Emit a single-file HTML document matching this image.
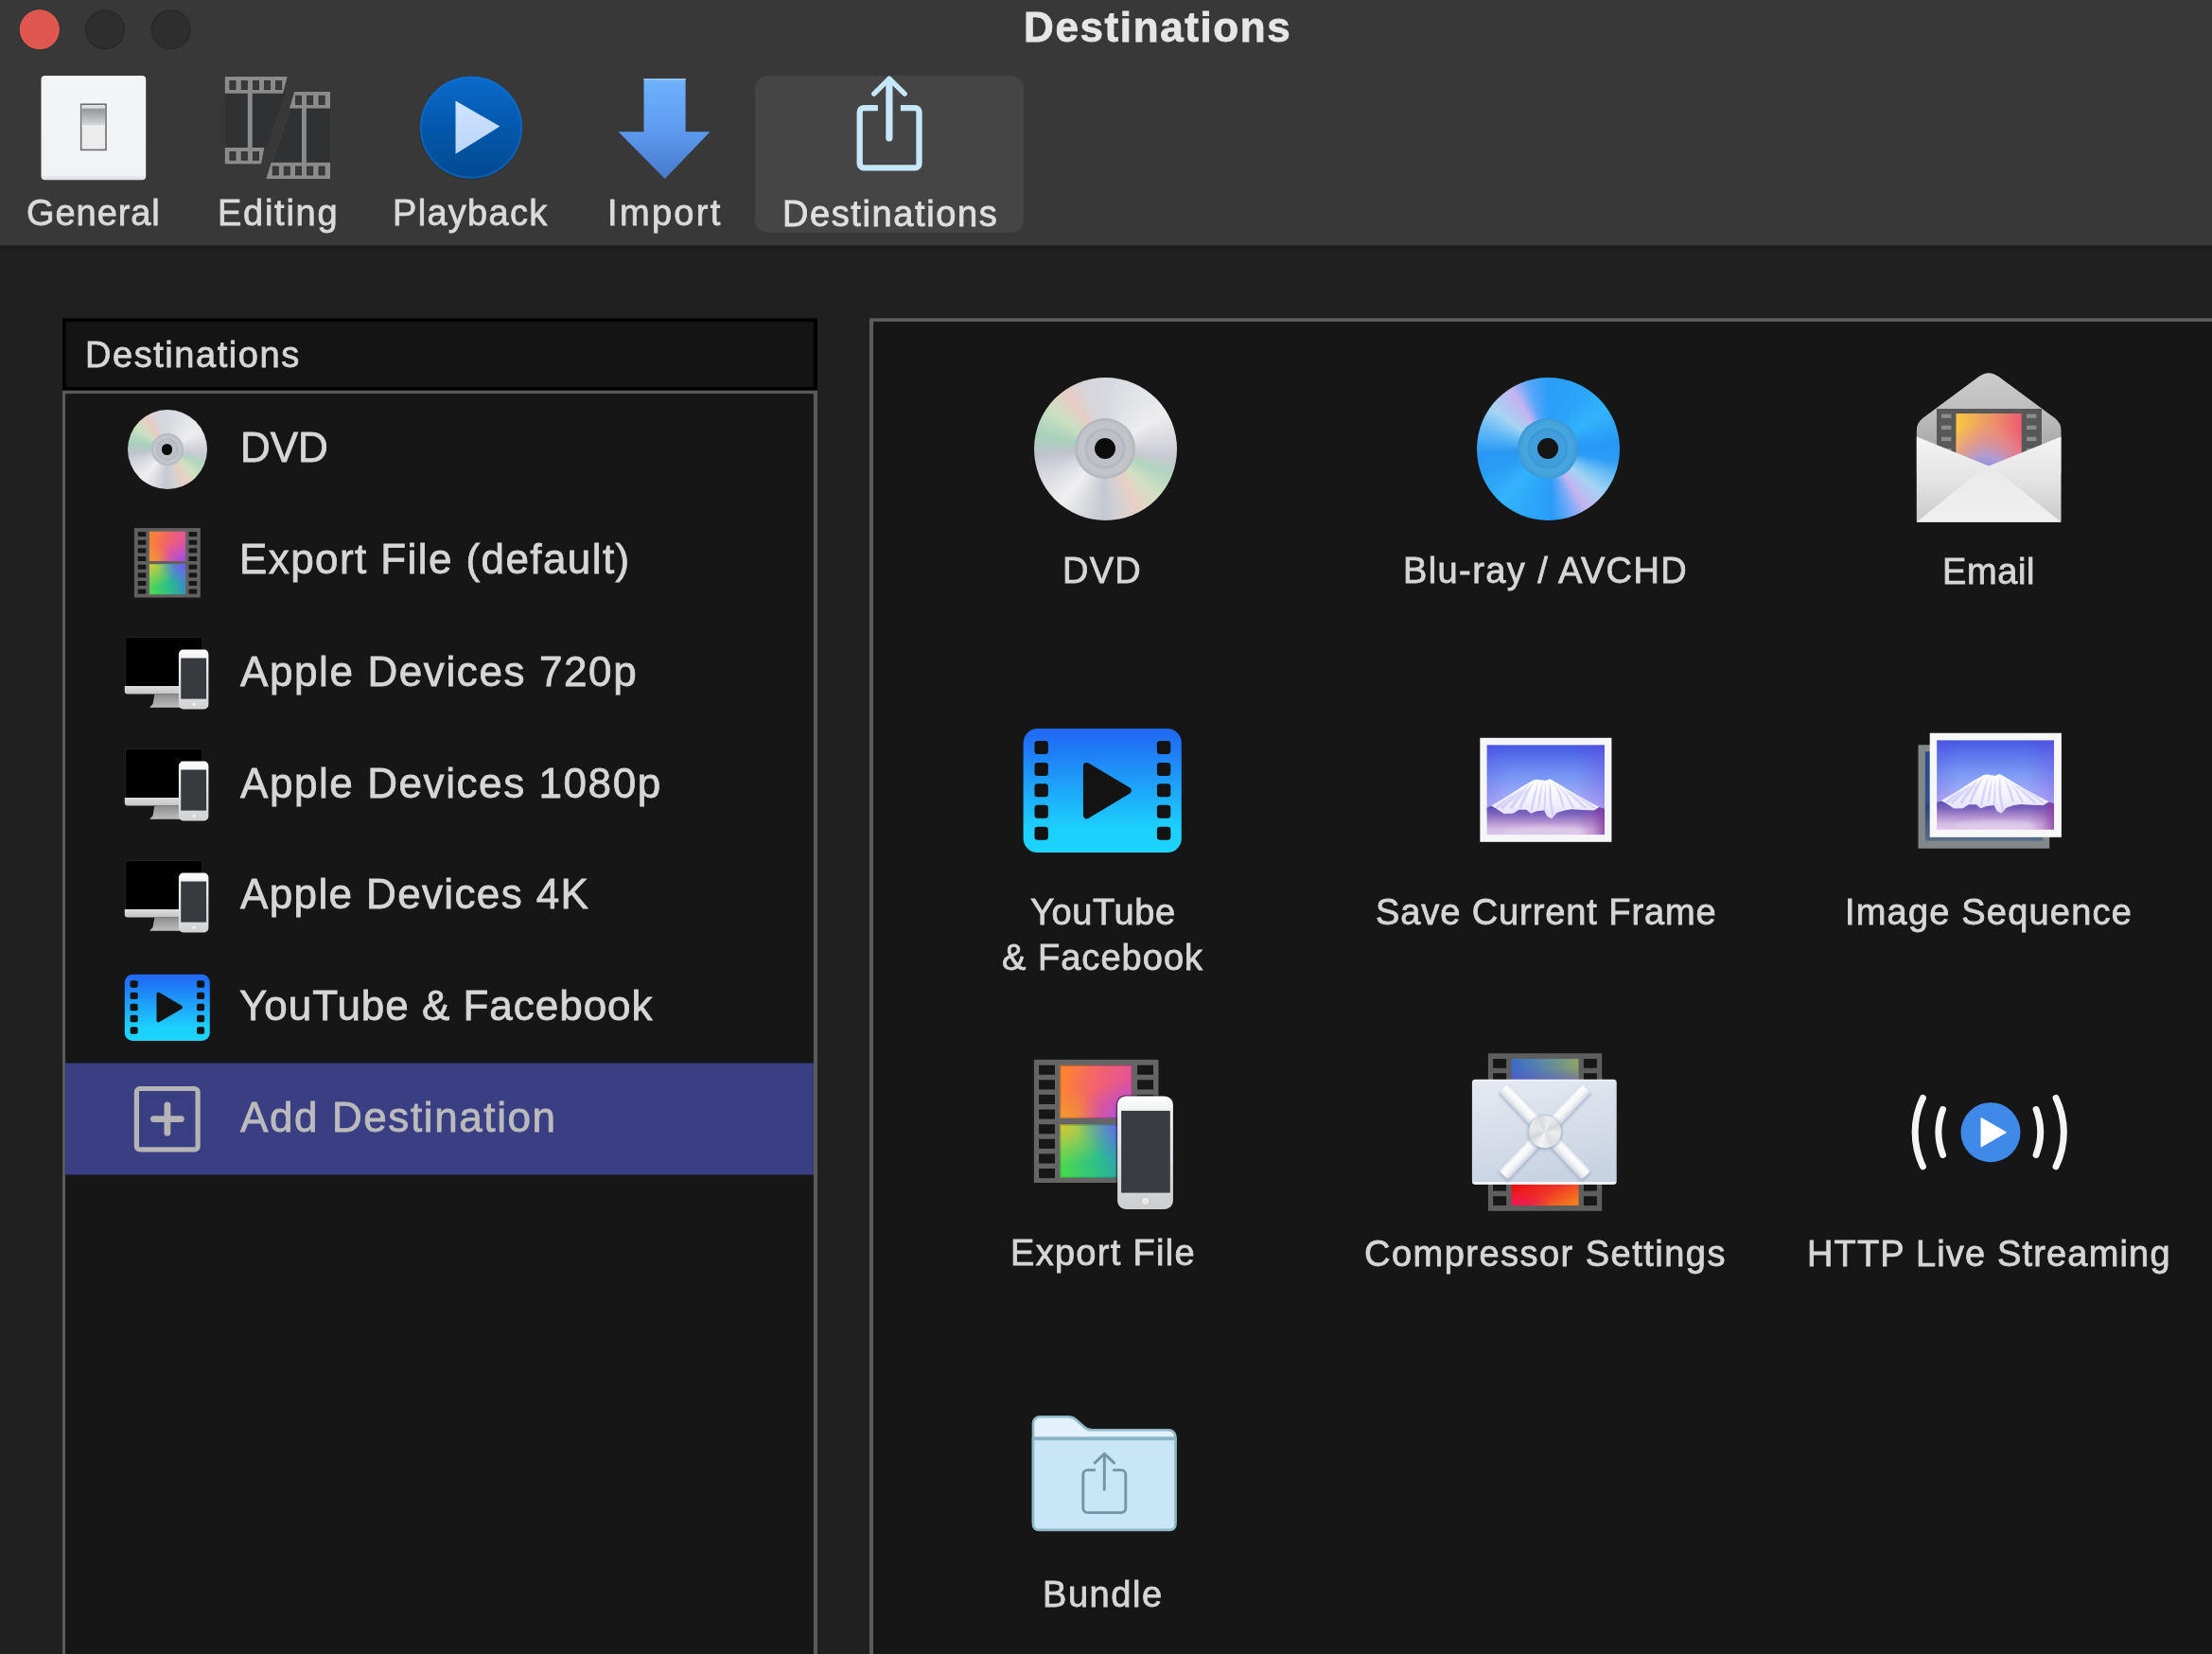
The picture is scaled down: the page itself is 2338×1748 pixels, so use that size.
<!DOCTYPE html>
<html lang="en">
<head>
<meta charset="utf-8">
<title>Destinations</title>
<style>
html,body{margin:0;padding:0;}
body{width:2338px;height:1748px;overflow:hidden;background:#202020;position:relative;font-family:"Liberation Sans",sans-serif;color:#dcdcdc;}
.abs{position:absolute;}
.t{position:absolute;white-space:nowrap;line-height:1;-webkit-text-stroke:0.8px currentColor;will-change:transform;}
.disc{border-radius:50%;background:conic-gradient(from 0deg,#d5d8de 0deg,#e2e4e8 30deg,#ededef 60deg,#d2d2da 88deg,#c6cace 99deg,#b0d4c0 111deg,#d0e0c2 131deg,#e8cfc4 151deg,#d2d1d5 168deg,#c4c8d0 182deg,#d8dade 200deg,#f0f0f2 220deg,#d6d8de 248deg,#c0c4cc 264deg,#a8d0bc 282deg,#cbe0c2 305deg,#e8ccc4 326deg,#d6d5da 342deg,#d5d8de 360deg);}
.bdisc{border-radius:50%;background:conic-gradient(from 0deg,#2a9ef8 0deg,#2aa4fa 30deg,#32b4fc 55deg,#2898f6 85deg,#2c9cf6 100deg,#70c0f4 115deg,#a2d4f4 129deg,#c2b4f0 148deg,#6aa8f8 162deg,#2a9cf8 176deg,#2ca8fa 200deg,#34b4fc 222deg,#2a9cf6 250deg,#2a98f4 266deg,#60b8f6 286deg,#a4d4f4 305deg,#c4b4f0 329deg,#58a6f8 343deg,#2a9ef8 360deg);}
.bdiscring{border-radius:50%;background:radial-gradient(circle,#3f9edb 0,#3f9edb 40%,#3998d4 44%,#47a5df 50%,#44a2dc 62%,#3c9ad6 68%,#3d9cd8 100%);}
.hub{border-radius:50%;background:conic-gradient(from 20deg,#eeeef0,#d4d6da 40deg,#ececee 80deg,#dcdde0 130deg,#f6f6f7 180deg,#d4d6da 225deg,#eaeaec 270deg,#d8dade 320deg,#eeeef0 360deg);}
.discring{border-radius:50%;background:radial-gradient(circle,#bdc0c6 0,#bdc0c6 40%,#b2b5bc 44%,#c2c5ca 50%,#c0c3c8 62%,#b4b7be 68%,#b7bac1 100%);}
.dischole{border-radius:50%;background:#0c0c0c;}
svg{position:absolute;overflow:visible;}
</style>
</head>
<body>
<svg width="2338" height="1748" viewBox="0 0 2338 1748" style="left:0;top:0">
<rect x="0" y="0" width="2338" height="259.5" fill="#383838"/>
<rect x="0" y="259.5" width="2338" height="4.2" fill="#1c1c1c"/>
<rect x="798" y="80" width="284" height="165.8" rx="14" fill="#454545"/>
<circle cx="41.8" cy="31.2" r="20.9" fill="#e0574f"/><circle cx="41.8" cy="31.2" r="20.4" fill="none" stroke="#ea5b52" stroke-width="1" opacity="0.7"/>
<circle cx="111.05" cy="31.2" r="20.8" fill="#2e2e2e"/><circle cx="111.05" cy="31.2" r="20.3" fill="none" stroke="#282828" stroke-width="1.2"/>
<circle cx="180.6" cy="31.2" r="20.8" fill="#2e2e2e"/><circle cx="180.6" cy="31.2" r="20.3" fill="none" stroke="#282828" stroke-width="1.2"/>
<rect x="66" y="336.4" width="798" height="76.1" fill="#000"/>
<rect x="69.4" y="339.8" width="790.5" height="69.1" fill="#141414"/>
<rect x="66" y="412.8" width="798" height="1400" fill="#5a5a5a"/>
<rect x="69.1" y="416.1" width="790.8" height="1400" fill="#161616"/>
<rect x="69.1" y="1123.5" width="790.8" height="118" fill="#3a3f84"/>
<rect x="919" y="336.3" width="1500" height="1500" fill="#5c5c5c"/>
<rect x="923" y="339.9" width="1500" height="1500" fill="#161616"/>
</svg>
<!--TOOLBAR-ICONS-->
<svg width="2338" height="1748" viewBox="0 0 2338 1748" style="left:0;top:0">
<defs>
<linearGradient id="gSw" x1="0" y1="0" x2="0" y2="1"><stop offset="0" stop-color="#e4e4e6"/><stop offset="0.12" stop-color="#dcdcde"/><stop offset="0.2" stop-color="#97989b"/><stop offset="0.75" stop-color="#c4c5c8"/><stop offset="0.93" stop-color="#d8d9db"/><stop offset="1" stop-color="#fafafa"/></linearGradient>
<linearGradient id="gPlate" x1="0" y1="0" x2="0" y2="1"><stop offset="0" stop-color="#f4f5f8"/><stop offset="0.95" stop-color="#f1f2f5"/><stop offset="1" stop-color="#d9dadd"/></linearGradient>
<linearGradient id="gPlay" x1="0" y1="0" x2="0" y2="1"><stop offset="0" stop-color="#0a6bcb"/><stop offset="0.5" stop-color="#0458ac"/><stop offset="1" stop-color="#024a90"/></linearGradient>
<linearGradient id="gTri" x1="0" y1="0" x2="0" y2="1"><stop offset="0" stop-color="#cfe4fd"/><stop offset="1" stop-color="#b9d5f9"/></linearGradient>
<linearGradient id="gImp" x1="0" y1="83" x2="0" y2="189" gradientUnits="userSpaceOnUse"><stop offset="0" stop-color="#6fb2fd"/><stop offset="0.5" stop-color="#5e9cf0"/><stop offset="1" stop-color="#4679cb"/></linearGradient>
</defs>
<!-- General -->
<rect x="43.5" y="80" width="110.7" height="110.2" rx="4" fill="url(#gPlate)"/>
<rect x="85.7" y="110.2" width="26.3" height="48.2" fill="#ececed" stroke="#6d6e71" stroke-width="1.6"/>
<rect x="86.6" y="111.1" width="24.5" height="22.6" fill="url(#gSw)"/>
<!-- Editing -->
<g>
<polygon points="237.8,98 302,98 281,157 237.8,157" fill="#303133"/>
<polygon points="308,114 349,114 349,172.5 288.5,172.5" fill="#303133"/>
<polygon points="237.8,81 303.6,81 299,98.7 237.8,98.7" fill="#8b8b8b"/>
<polygon points="237.8,156 279.3,156 276,173.3 237.8,173.3" fill="#8b8b8b"/>
<polygon points="311.3,96.9 349,96.9 349,114.6 305.9,114.6" fill="#8b8b8b"/>
<polygon points="286.7,171.8 349,171.8 349,189.1 281.3,189.1" fill="#8b8b8b"/>
<rect x="261.8" y="98" width="4.9" height="59" fill="#8b8b8b"/>
<rect x="319" y="114" width="4.9" height="58.5" fill="#8b8b8b"/>
<g fill="#3a3a3a" stroke="#2c2c2c" stroke-width="0.8">
<rect x="242.9" y="85.4" width="6.1" height="9.2"/><rect x="255.2" y="85.4" width="6.1" height="9.2"/><rect x="267.5" y="85.4" width="6.1" height="9.2"/><rect x="279.5" y="85.4" width="6.1" height="9.2"/><rect x="291.6" y="85.4" width="6.1" height="9.2"/>
<rect x="242.9" y="160.4" width="6.1" height="8.8"/><rect x="255.2" y="160.4" width="6.1" height="8.8"/><rect x="267.5" y="160.4" width="6.1" height="8.8"/>
<rect x="312.5" y="101.2" width="6.1" height="9.2"/><rect x="324.6" y="101.2" width="6.1" height="9.2"/><rect x="337" y="101.2" width="6.1" height="9.2"/>
<rect x="288.2" y="176" width="6.1" height="9"/><rect x="300.2" y="176" width="6.1" height="9"/><rect x="312.5" y="176" width="6.1" height="9"/><rect x="324.6" y="176" width="6.1" height="9"/><rect x="337" y="176" width="6.1" height="9"/>
</g>
</g>
<!-- Playback -->
<circle cx="498" cy="136" r="54" fill="#2a2a2a" opacity="0.5"/>
<circle cx="498" cy="134.7" r="54" fill="url(#gPlay)"/>
<circle cx="498" cy="134.7" r="53" fill="none" stroke="#0b70d2" stroke-width="2" opacity="0.6"/>
<polygon points="481.5,106.4 528.4,133.6 481.5,162.7" fill="url(#gTri)"/>
<!-- Import -->
<polygon points="680.5,83 724.6,83 724.6,139.2 750.5,139.2 702.8,189.1 653.6,139.2 680.5,139.2" fill="url(#gImp)"/>
<rect x="680.5" y="83" width="44.1" height="1.6" fill="#93c8ff"/>
<!-- Destinations share -->
<g fill="none" stroke="#c5e7f7" stroke-linejoin="round">
<path d="M927.9,114.05 H913.1 a4.4,4.4 0 0 0 -4.4,4.4 V172.9 a4.4,4.4 0 0 0 4.4,4.4 H967.1 a4.4,4.4 0 0 0 4.4,-4.4 V118.45 a4.4,4.4 0 0 0 -4.4,-4.4 H951.9" stroke-width="6.3" stroke-linecap="butt"/>
<path d="M939.9,145.8 V85" stroke-width="7.2" stroke-linecap="round"/>
<path d="M923.8,99.2 L939.9,83.1 L956.2,99.2" stroke-width="5.4" stroke-linecap="round"/>
</g>
</svg>
<!--/TOOLBAR-ICONS-->
<!--TEXTS-->
<div class="t" style="left:1082.38px;top:6.94px;font-size:44px;font-weight:bold;letter-spacing:1.613px;color:#e6e6e6;">Destinations</div>
<div class="t" style="left:27.84px;top:206.46px;font-size:38px;font-weight:normal;letter-spacing:0.937px;color:#dadada;">General</div>
<div class="t" style="left:229.78px;top:206.16px;font-size:38px;font-weight:normal;letter-spacing:1.726px;color:#dadada;">Editing</div>
<div class="t" style="left:415.28px;top:205.66px;font-size:38px;font-weight:normal;letter-spacing:1.296px;color:#dadada;">Playback</div>
<div class="t" style="left:642.25px;top:205.66px;font-size:38px;font-weight:normal;letter-spacing:2.341px;color:#dadada;">Import</div>
<div class="t" style="left:826.91px;top:206.51px;font-size:38px;font-weight:normal;letter-spacing:1.596px;color:#e0e0e0;">Destinations</div>
<div class="t" style="left:89.77px;top:356.13px;font-size:38px;font-weight:normal;letter-spacing:1.556px;color:#d6d6d6;">Destinations</div>
<div class="t" style="left:253.67px;top:451.05px;font-size:44px;font-weight:normal;letter-spacing:-0.021px;color:#d6d6d6;">DVD</div>
<div class="t" style="left:253.17px;top:568.55px;font-size:44px;font-weight:normal;letter-spacing:1.413px;color:#d6d6d6;">Export File (default)</div>
<div class="t" style="left:254.46px;top:687.55px;font-size:44px;font-weight:normal;letter-spacing:1.606px;color:#d6d6d6;">Apple Devices 720p</div>
<div class="t" style="left:254.46px;top:805.55px;font-size:44px;font-weight:normal;letter-spacing:1.575px;color:#d6d6d6;">Apple Devices 1080p</div>
<div class="t" style="left:254.46px;top:923.05px;font-size:44px;font-weight:normal;letter-spacing:1.370px;color:#d6d6d6;">Apple Devices 4K</div>
<div class="t" style="left:252.88px;top:1041.05px;font-size:44px;font-weight:normal;letter-spacing:0.978px;color:#d6d6d6;">YouTube &amp; Facebook</div>
<div class="t" style="left:254.43px;top:1159.12px;font-size:44px;font-weight:normal;letter-spacing:1.602px;color:#bcbbbc;">Add Destination</div>
<div class="t" style="left:1122.79px;top:584.13px;font-size:38px;font-weight:normal;letter-spacing:1.279px;color:#d6d6d6;">DVD</div>
<div class="t" style="left:1482.79px;top:584.13px;font-size:38px;font-weight:normal;letter-spacing:1.401px;color:#d6d6d6;">Blu-ray / AVCHD</div>
<div class="t" style="left:2052.79px;top:584.63px;font-size:38px;font-weight:normal;letter-spacing:0.615px;color:#d6d6d6;">Email</div>
<div class="t" style="left:1088.75px;top:945.13px;font-size:38px;font-weight:normal;letter-spacing:0.627px;color:#d6d6d6;">YouTube</div>
<div class="t" style="left:1059.27px;top:993.43px;font-size:38px;font-weight:normal;letter-spacing:1.031px;color:#d6d6d6;">&amp; Facebook</div>
<div class="t" style="left:1453.56px;top:944.89px;font-size:38px;font-weight:normal;letter-spacing:0.909px;color:#d6d6d6;">Save Current Frame</div>
<div class="t" style="left:1949.75px;top:944.63px;font-size:38px;font-weight:normal;letter-spacing:1.193px;color:#d6d6d6;">Image Sequence</div>
<div class="t" style="left:1068.29px;top:1305.13px;font-size:38px;font-weight:normal;letter-spacing:1.293px;color:#d6d6d6;">Export File</div>
<div class="t" style="left:1441.98px;top:1305.73px;font-size:38px;font-weight:normal;letter-spacing:1.477px;color:#d6d6d6;">Compressor Settings</div>
<div class="t" style="left:1909.79px;top:1305.63px;font-size:38px;font-weight:normal;letter-spacing:1.166px;color:#d6d6d6;">HTTP Live Streaming</div>
<div class="t" style="left:1102.29px;top:1666.13px;font-size:38px;font-weight:normal;letter-spacing:1.561px;color:#d6d6d6;">Bundle</div><!--/TEXTS-->
<!--LEFT-ICONS-->
<div class="abs disc" style="left:134.9px;top:432.9px;width:84px;height:84px;"></div>
<div class="abs discring" style="left:159.8px;top:457.9px;width:34px;height:34px;"></div>
<div class="abs dischole" style="left:171.1px;top:469.2px;width:11.4px;height:11.4px;"></div>
<svg width="2338" height="1748" viewBox="0 0 2338 1748" style="left:0;top:0">
<defs>
<linearGradient id="fA" x1="0" y1="0.3" x2="1" y2="0.5"><stop offset="0" stop-color="#fd8430"/><stop offset="0.5" stop-color="#f2626e"/><stop offset="1" stop-color="#e0529e"/></linearGradient>
<radialGradient id="fA2" cx="1" cy="1" r="0.75"><stop offset="0" stop-color="#9a48ea"/><stop offset="0.35" stop-color="#b050d8" stop-opacity="0.75"/><stop offset="1" stop-color="#c050c0" stop-opacity="0"/></radialGradient>
<radialGradient id="fA3" cx="0" cy="1" r="0.6"><stop offset="0" stop-color="#f09a30"/><stop offset="1" stop-color="#f09a30" stop-opacity="0"/></radialGradient>
<linearGradient id="fB" x1="0" y1="0.6" x2="1" y2="0.4"><stop offset="0" stop-color="#48d850"/><stop offset="0.5" stop-color="#2cbe8c"/><stop offset="1" stop-color="#3488c4"/></linearGradient>
<radialGradient id="fB2" cx="0" cy="0" r="0.8"><stop offset="0" stop-color="#e0c434"/><stop offset="0.4" stop-color="#c4cc40" stop-opacity="0.7"/><stop offset="1" stop-color="#a0d050" stop-opacity="0"/></radialGradient>
<radialGradient id="fB3" cx="1" cy="0" r="0.75"><stop offset="0" stop-color="#7458f4"/><stop offset="0.4" stop-color="#6a6eea" stop-opacity="0.7"/><stop offset="1" stop-color="#5090d8" stop-opacity="0"/></radialGradient>
<linearGradient id="gYT" x1="0" y1="0" x2="0" y2="1"><stop offset="0" stop-color="#2168f3"/><stop offset="0.15" stop-color="#1f78f6"/><stop offset="0.8" stop-color="#1cd0fd"/><stop offset="1" stop-color="#1cd4fd"/></linearGradient>
<linearGradient id="gPhone" x1="0" y1="0" x2="0" y2="1"><stop offset="0" stop-color="#fbfbfb"/><stop offset="0.5" stop-color="#e4e5e6"/><stop offset="1" stop-color="#d0d2d4"/></linearGradient>
<linearGradient id="gChin" x1="0" y1="0" x2="0" y2="1"><stop offset="0" stop-color="#dedede"/><stop offset="1" stop-color="#c4c4c4"/></linearGradient>
<linearGradient id="gStand" x1="0" y1="0" x2="0" y2="1"><stop offset="0" stop-color="#8c8c8c"/><stop offset="1" stop-color="#bdbdbd"/></linearGradient>
<g id="appledev">
<path d="M131.8,676 a3,3 0 0 1 3,-3 H211.6 a3,3 0 0 1 3,3 V730.5 a3,3 0 0 1 -3,3 H134.8 a3,3 0 0 1 -3,-3 Z" fill="#1e1e1e"/>
<path d="M133.2,676.4 a2.4,2.4 0 0 1 2.4,-2.4 H210.8 a2.4,2.4 0 0 1 2.4,2.4 V725 H133.2 Z" fill="#000"/>
<path d="M131.8,725 H214.6 V730.5 a3,3 0 0 1 -3,3 H134.8 a3,3 0 0 1 -3,-3 Z" fill="url(#gChin)"/>
<polygon points="163.4,733.5 200,733.5 200,747.7 158,747.7 161.5,744" fill="url(#gStand)"/>
<rect x="188.9" y="686.6" width="31.5" height="62.8" rx="4.6" fill="url(#gPhone)"/>
<rect x="191.2" y="695.5" width="26.9" height="43.1" fill="#373b40"/>
<circle cx="205" cy="744.2" r="2.4" fill="#eeeeef" stroke="#c4c6c8" stroke-width="0.7"/>
</g>
<g id="yticon">
<rect x="0" y="0" width="90" height="70.2" rx="8.5" fill="url(#gYT)"/>
<g fill="#131313">
<rect x="5.8" y="6.5" width="8.1" height="7.4" rx="1.8"/><rect x="5.8" y="18.9" width="8.1" height="7.4" rx="1.8"/><rect x="5.8" y="31" width="8.1" height="7.4" rx="1.8"/><rect x="5.8" y="43" width="8.1" height="7.4" rx="1.8"/><rect x="5.8" y="55.5" width="8.1" height="7.4" rx="1.8"/>
<rect x="76.2" y="6.5" width="8.1" height="7.4" rx="1.8"/><rect x="76.2" y="18.9" width="8.1" height="7.4" rx="1.8"/><rect x="76.2" y="31" width="8.1" height="7.4" rx="1.8"/><rect x="76.2" y="43" width="8.1" height="7.4" rx="1.8"/><rect x="76.2" y="55.5" width="8.1" height="7.4" rx="1.8"/>
<path d="M35.7,20.8 L59.2,34.7 L35.7,48.6 Z" stroke="#131313" stroke-width="4" stroke-linejoin="round"/>
</g>
</g>
</defs>
<!-- Export file small -->
<rect x="141.9" y="558.1" width="69.9" height="73.4" fill="#616161"/>
<g fill="#161616">
<rect x="145.7" y="562.1" width="8.6" height="5"/><rect x="145.7" y="570.75" width="8.6" height="5"/><rect x="145.7" y="579.4" width="8.6" height="5"/><rect x="145.7" y="588.05" width="8.6" height="5"/><rect x="145.7" y="596.7" width="8.6" height="5"/><rect x="145.7" y="605.35" width="8.6" height="5"/><rect x="145.7" y="614" width="8.6" height="5"/><rect x="145.7" y="622.65" width="8.6" height="5"/>
<rect x="199.6" y="562.1" width="8.6" height="5"/><rect x="199.6" y="570.75" width="8.6" height="5"/><rect x="199.6" y="579.4" width="8.6" height="5"/><rect x="199.6" y="588.05" width="8.6" height="5"/><rect x="199.6" y="596.7" width="8.6" height="5"/><rect x="199.6" y="605.35" width="8.6" height="5"/><rect x="199.6" y="614" width="8.6" height="5"/><rect x="199.6" y="622.65" width="8.6" height="5"/>
</g>
<rect x="157.9" y="561.7" width="38.2" height="31.2" fill="url(#fA)"/><rect x="157.9" y="561.7" width="38.2" height="31.2" fill="url(#fA3)"/><rect x="157.9" y="561.7" width="38.2" height="31.2" fill="url(#fA2)"/>
<rect x="157.9" y="596.3" width="38.2" height="31.9" fill="url(#fB)"/><rect x="157.9" y="596.3" width="38.2" height="31.9" fill="url(#fB2)"/><rect x="157.9" y="596.3" width="38.2" height="31.9" fill="url(#fB3)"/>
<!-- Apple devices x3 -->
<use href="#appledev"/>
<use href="#appledev" transform="translate(0,118)"/>
<use href="#appledev" transform="translate(0,236)"/>
<!-- YouTube small -->
<use href="#yticon" transform="translate(131.8,1029.8)"/>
<!-- Add -->
<rect x="144.4" y="1150.5" width="64.7" height="64.4" rx="3.5" fill="none" stroke="#b5b3b4" stroke-width="5.2"/>
<path d="M162.4,1182.6 H191.4 M176.9,1168 V1197.2" stroke="#b5b3b4" stroke-width="6.8" stroke-linecap="round" fill="none"/>
</svg>
<!--/LEFT-ICONS-->
<!--GRID-ICONS-->
<div class="abs disc" style="left:1092.8px;top:398.7px;width:151px;height:151px;"></div>
<div class="abs discring" style="left:1136.1px;top:442px;width:64px;height:64px;"></div>
<div class="abs dischole" style="left:1157px;top:463px;width:22px;height:22px;"></div>
<div class="abs bdisc" style="left:1560.9px;top:398.5px;width:151px;height:151px;"></div>
<div class="abs bdiscring" style="left:1604.4px;top:442px;width:64px;height:64px;"></div>
<div class="abs dischole" style="left:1625.4px;top:463px;width:22px;height:22px;background:#151515;"></div>
<svg width="2338" height="1748" viewBox="0 0 2338 1748" style="left:0;top:0">
<defs>
<linearGradient id="gSky" x1="0" y1="0" x2="0" y2="1"><stop offset="0" stop-color="#4757e6"/><stop offset="0.25" stop-color="#5f7cee"/><stop offset="0.5" stop-color="#7c9af4"/><stop offset="0.75" stop-color="#a0acf9"/><stop offset="0.92" stop-color="#bcb8fc"/><stop offset="1" stop-color="#c6bcfc"/></linearGradient>
<linearGradient id="gFore" x1="0" y1="0" x2="0" y2="1"><stop offset="0" stop-color="#5650b6"/><stop offset="0.25" stop-color="#7a62bc"/><stop offset="0.55" stop-color="#b090d0"/><stop offset="0.8" stop-color="#d4bce4"/><stop offset="1" stop-color="#dcc6ea"/></linearGradient>
<radialGradient id="gMag" cx="1" cy="0.65" r="0.35" gradientTransform="scale(1,1)"><stop offset="0" stop-color="#8a38a0"/><stop offset="0.5" stop-color="#9448a8" stop-opacity="0.6"/><stop offset="1" stop-color="#a060b0" stop-opacity="0"/></radialGradient>
<linearGradient id="gSnow" x1="0" y1="0" x2="0" y2="1"><stop offset="0" stop-color="#ffffff"/><stop offset="0.6" stop-color="#f2f0ff"/><stop offset="1" stop-color="#dcd8fa"/></linearGradient>
<clipPath id="cpFuji"><rect x="0" y="0" width="124.6" height="95"/></clipPath>
<filter id="fBlur" x="-10%" y="-10%" width="120%" height="120%"><feGaussianBlur stdDeviation="0.45"/></filter>
<filter id="fBlur2" x="-30%" y="-80%" width="160%" height="260%"><feGaussianBlur stdDeviation="2.2"/></filter>
<linearGradient id="gMagL" x1="0" y1="0" x2="1" y2="0"><stop offset="0" stop-color="#8a3aa2" stop-opacity="0"/><stop offset="0.55" stop-color="#8a3aa2" stop-opacity="0.28"/><stop offset="1" stop-color="#86389e" stop-opacity="0.8"/></linearGradient>
<linearGradient id="gVig" x1="0" y1="0" x2="1" y2="0"><stop offset="0" stop-color="#5a3cd8" stop-opacity="0.22"/><stop offset="0.2" stop-color="#5a3cd8" stop-opacity="0"/><stop offset="0.75" stop-color="#6a3cd8" stop-opacity="0"/><stop offset="1" stop-color="#6a3cd8" stop-opacity="0.3"/></linearGradient>
<g id="fuji" clip-path="url(#cpFuji)">
<rect x="0" y="0" width="124.6" height="72" fill="url(#gSky)"/>
<rect x="0" y="0" width="124.6" height="72" fill="url(#gVig)"/>
<path d="M4,65 L23,53.6 L38.7,43.4 L49,37.5 Q52,36.4 54.5,36.7 L62.3,37.9 L66.6,36 L70.2,37.9 L78,42.6 L93.8,52 L109.5,60.7 L121,66.5 V80 H4 Z" fill="url(#gSnow)" filter="url(#fBlur)"/>
<g fill="#aeaaf2" opacity="0.4" filter="url(#fBlur)">
<path d="M55,38 L49.5,52 L46,70 L48,70 L52,54 Z"/>
<path d="M59,39 L55,54 L54,66 L55.6,66 L57.6,55 Z"/>
<path d="M62.5,39 L60.5,55 L60,70 L62,70 L62.6,56 Z"/>
<path d="M66.9,37 L65.6,50 L66.4,62 L69.6,76 L71,72 L68.6,58 L68.2,48 Z"/>
<path d="M70.5,39.5 L76,52 L80,66 L82.4,66 L78.6,52 Z"/>
<path d="M73,40.6 L83,53 L90,66 L93,67 L86,54 Z"/>
<path d="M78,43.5 L92,57 L103,67 L106.6,67 L96,57 Z"/>
<path d="M86,49 L104,61 L112,67 L115,66.5 L106,60 Z"/>
<path d="M50,38.5 L40,50 L34,66 L36.6,67 L43.6,52 Z"/>
<path d="M45,40.8 L33,52 L24,66 L27,68 L37,54 Z"/>
<path d="M38,45.5 L24,56.5 L14,66 L17,68 L28,58 Z"/>
<path d="M30,50.5 L17,59 L9,65 L12,67 L20,60 Z"/>
</g>
<path d="M0,66.2 L5,64.6 L9.7,67 L18.3,72.8 L27.7,72.5 L34,68.5 L41.9,68.5 L46.6,72.5 L52.9,70.1 L60.7,69.3 L63.9,75.6 L68.6,78 L74.1,71.7 L82,69.3 L89.8,68.1 L101.6,68.9 L113.4,69.3 L118.9,65.8 L124.8,67.7 V95.4 H0 Z" fill="url(#gFore)"/>
<path d="M96,68.6 L101.6,68.9 L113.4,69.3 L118.9,65.8 L124.8,67.7 V95.4 H96 Z" fill="url(#gMagL)"/>
<ellipse cx="62" cy="92" rx="44" ry="7" fill="#e6d8f0" opacity="0.4" filter="url(#fBlur2)"/>
</g>
<linearGradient id="gEnvBack" x1="0" y1="393" x2="0" y2="495" gradientUnits="userSpaceOnUse"><stop offset="0" stop-color="#cdcdcd"/><stop offset="0.45" stop-color="#bcbcbc"/><stop offset="1" stop-color="#9c9c9c"/></linearGradient>
<linearGradient id="gEnvFront" x1="0" y1="461" x2="0" y2="552" gradientUnits="userSpaceOnUse"><stop offset="0" stop-color="#f4f4f4"/><stop offset="0.5" stop-color="#e4e4e4"/><stop offset="1" stop-color="#cacaca"/></linearGradient>
<linearGradient id="gEnvBot" x1="0" y1="492" x2="0" y2="552" gradientUnits="userSpaceOnUse"><stop offset="0" stop-color="#e9e9e9"/><stop offset="1" stop-color="#f0f0f0"/></linearGradient>
<linearGradient id="gMailPic" x1="0" y1="0" x2="1" y2="0"><stop offset="0" stop-color="#f8c844"/><stop offset="0.5" stop-color="#ec9866"/><stop offset="1" stop-color="#ee5c70"/></linearGradient>
<radialGradient id="gMailPic2" cx="0.46" cy="1.0" r="0.85"><stop offset="0" stop-color="#8690e2"/><stop offset="0.3" stop-color="#ac9cd6" stop-opacity="0.95"/><stop offset="0.62" stop-color="#d68eac" stop-opacity="0.6"/><stop offset="1" stop-color="#e890a0" stop-opacity="0"/></radialGradient>
<linearGradient id="cA" x1="0" y1="0.5" x2="1" y2="0.4"><stop offset="0" stop-color="#3a68cc"/><stop offset="0.5" stop-color="#5a88a8"/><stop offset="1" stop-color="#8ca268"/></linearGradient>
<linearGradient id="cA2" x1="0" y1="0" x2="0" y2="1"><stop offset="0.4" stop-color="#6050c0" stop-opacity="0"/><stop offset="1" stop-color="#6a58b0" stop-opacity="0.6"/></linearGradient>
<linearGradient id="cB" x1="0" y1="0.2" x2="1" y2="0.8"><stop offset="0" stop-color="#f00c14"/><stop offset="0.5" stop-color="#ee3428"/><stop offset="1" stop-color="#f67c1e"/></linearGradient>
<radialGradient id="cB2" cx="0.1" cy="0.9" r="0.5"><stop offset="0" stop-color="#ee1850"/><stop offset="1" stop-color="#ee1850" stop-opacity="0"/></radialGradient>
<linearGradient id="gPlateC" x1="0" y1="0" x2="0.25" y2="1"><stop offset="0" stop-color="#e6eaf2"/><stop offset="0.5" stop-color="#d8dfea"/><stop offset="1" stop-color="#c8d3e2"/></linearGradient>
<filter id="fBlur3" x="-20%" y="-20%" width="140%" height="140%"><feGaussianBlur stdDeviation="1.3"/></filter>
<linearGradient id="gArm" x1="0" y1="0" x2="0" y2="1"><stop offset="0" stop-color="#dde1e7"/><stop offset="0.25" stop-color="#fdfdfe"/><stop offset="0.6" stop-color="#f4f5f7"/><stop offset="1" stop-color="#d0d6de"/></linearGradient>
<linearGradient id="gPhoneB" x1="0" y1="0" x2="0" y2="1"><stop offset="0" stop-color="#ffffff"/><stop offset="0.12" stop-color="#f0f1f2"/><stop offset="0.5" stop-color="#e0e2e5"/><stop offset="0.86" stop-color="#d2d3d5"/><stop offset="1" stop-color="#cdcecf"/></linearGradient>
<linearGradient id="gFoldBack" x1="0" y1="0" x2="0" y2="1"><stop offset="0" stop-color="#e4f2fc"/><stop offset="1" stop-color="#d4ebf8"/></linearGradient>
</defs>
<!-- Email -->
<path d="M2025.8,455 Q2025.8,446.8 2032.5,441.8 L2091.5,398 Q2102,390.4 2112.5,398 L2171.7,441.8 Q2178.5,446.8 2178.5,455 V500 H2025.8 Z" fill="url(#gEnvBack)"/>
<rect x="2047" y="432" width="111" height="70" fill="#585858"/>
<g fill="#8c8c8c"><rect x="2052" y="437.6" width="10.4" height="4.3"/><rect x="2052" y="449.7" width="10.4" height="4.3"/><rect x="2052" y="461.8" width="10.4" height="4.3"/><rect x="2052" y="473.9" width="10.4" height="4.3"/>
<rect x="2142" y="437.6" width="10.4" height="4.3"/><rect x="2142" y="449.7" width="10.4" height="4.3"/><rect x="2142" y="461.8" width="10.4" height="4.3"/><rect x="2142" y="473.9" width="10.4" height="4.3"/></g>
<rect x="2067.5" y="437" width="69.2" height="60" fill="url(#gMailPic)"/><rect x="2067.5" y="437" width="69.2" height="60" fill="url(#gMailPic2)"/>
<path d="M2025.8,461.4 L2102,492.6 L2178.5,461.4 V551.7 H2025.8 Z" fill="url(#gEnvFront)"/>
<path d="M2025.8,551.7 L2096,495.2 Q2102,490.4 2108,495.2 L2178.5,551.7 Z" fill="url(#gEnvBot)"/>
<!-- YouTube big -->
<rect x="1081.6" y="770" width="167.2" height="131.1" rx="15" fill="url(#gYT)"/>
<g fill="#131313"><rect x="1093.5" y="783" width="14.4" height="14" rx="3.2"/><rect x="1093.5" y="805.9" width="14.4" height="14" rx="3.2"/><rect x="1093.5" y="828.3" width="14.4" height="14" rx="3.2"/><rect x="1093.5" y="850.8" width="14.4" height="14" rx="3.2"/><rect x="1093.5" y="873.8" width="14.4" height="14" rx="3.2"/><rect x="1222.9" y="783" width="14.4" height="14" rx="3.2"/><rect x="1222.9" y="805.9" width="14.4" height="14" rx="3.2"/><rect x="1222.9" y="828.3" width="14.4" height="14" rx="3.2"/><rect x="1222.9" y="850.8" width="14.4" height="14" rx="3.2"/><rect x="1222.9" y="873.8" width="14.4" height="14" rx="3.2"/>
<path d="M1148.6,809.6 L1192,835.5 L1148.6,861.5 Z" stroke="#131313" stroke-width="7.4" stroke-linejoin="round"/></g>
<!-- Save current frame -->
<rect x="1564.3" y="779.8" width="139.1" height="110" fill="#f6f6f8"/>
<use href="#fuji" transform="translate(1571.4,787.2)"/>
<!-- Image sequence -->
<rect x="2027.5" y="787.2" width="138.7" height="109.5" fill="#82878a"/>
<linearGradient id="gBackPic" x1="0" y1="0" x2="0" y2="1"><stop offset="0" stop-color="#2a4a8c"/><stop offset="0.55" stop-color="#34508a"/><stop offset="0.6" stop-color="#2c4478"/><stop offset="1" stop-color="#5a6c88"/></linearGradient>
<rect x="2034.8" y="794.2" width="124.5" height="94.4" fill="url(#gBackPic)"/>
<rect x="2039.7" y="774.7" width="139.2" height="110.1" fill="#f7f7f8"/>
<use href="#fuji" transform="translate(2047.1,782.2) scale(0.995,0.994)"/>
<!-- Export file big -->
<rect x="1092.9" y="1119.9" width="131.6" height="130.1" fill="#656565"/>
<g fill="#171717">
<rect x="1098.1" y="1125.7" width="16.9" height="10.1"/><rect x="1098.1" y="1141.3" width="16.9" height="10.1"/><rect x="1098.1" y="1156.9" width="16.9" height="10.1"/><rect x="1098.1" y="1172.5" width="16.9" height="10.1"/><rect x="1098.1" y="1188.2" width="16.9" height="10.1"/><rect x="1098.1" y="1203.8" width="16.9" height="10.1"/><rect x="1098.1" y="1219.4" width="16.9" height="10.1"/><rect x="1098.1" y="1235" width="16.9" height="10.1"/>
<rect x="1202.1" y="1125.7" width="16.9" height="10.1"/><rect x="1202.1" y="1141.3" width="16.9" height="10.1"/><rect x="1202.1" y="1156.9" width="16.9" height="10.1"/><rect x="1202.1" y="1172.5" width="16.9" height="10.1"/><rect x="1202.1" y="1188.2" width="16.9" height="10.1"/><rect x="1202.1" y="1203.8" width="16.9" height="10.1"/><rect x="1202.1" y="1219.4" width="16.9" height="10.1"/><rect x="1202.1" y="1235" width="16.9" height="10.1"/>
</g>
<rect x="1120.2" y="1125.7" width="76.4" height="56.3" fill="url(#fA)"/><rect x="1120.2" y="1125.7" width="76.4" height="56.3" fill="url(#fA3)"/><rect x="1120.2" y="1125.7" width="76.4" height="56.3" fill="url(#fA2)"/>
<rect x="1120.8" y="1126.3" width="75.2" height="55.1" fill="none" stroke="#000" stroke-opacity="0.18" stroke-width="1.4"/>
<rect x="1120.2" y="1188.3" width="76.4" height="56.6" fill="url(#fB)"/><rect x="1120.2" y="1188.3" width="76.4" height="56.6" fill="url(#fB2)"/><rect x="1120.2" y="1188.3" width="76.4" height="56.6" fill="url(#fB3)"/>
<rect x="1120.8" y="1188.9" width="75.2" height="55.4" fill="none" stroke="#000" stroke-opacity="0.18" stroke-width="1.4"/>
<rect x="1179.6" y="1157.2" width="61.8" height="122" rx="10" fill="#161616" opacity="0.55"/>
<rect x="1181.1" y="1158.4" width="58.8" height="119.5" rx="9" fill="url(#gPhoneB)"/>
<rect x="1185.1" y="1173.9" width="51.7" height="86.7" fill="#393c41"/>
<circle cx="1210.7" cy="1269.3" r="4.4" fill="#e9e9ea" stroke="#bfc0c2" stroke-width="1"/>
<!-- Compressor -->
<rect x="1572.9" y="1113.2" width="120.3" height="166.6" fill="#5e5e5e"/>
<g fill="#171717">
<rect x="1578.1" y="1119" width="14" height="9.8"/><rect x="1578.1" y="1134.2" width="14" height="9.8"/><rect x="1578.1" y="1248.8" width="14" height="9.8"/><rect x="1578.1" y="1264.2" width="14" height="9.8"/>
<rect x="1673.9" y="1119" width="14" height="9.8"/><rect x="1673.9" y="1134.2" width="14" height="9.8"/><rect x="1673.9" y="1248.8" width="14" height="9.8"/><rect x="1673.9" y="1264.2" width="14" height="9.8"/>
</g>
<rect x="1597.6" y="1119" width="70.9" height="24" fill="url(#cA)"/><rect x="1597.6" y="1119" width="70.9" height="24" fill="url(#cA2)"/>
<rect x="1597.6" y="1249" width="70.9" height="25" fill="url(#cB)"/><rect x="1597.6" y="1249" width="70.9" height="25" fill="url(#cB2)"/>
<rect x="1555.9" y="1140.8" width="152.8" height="110.8" rx="3.5" fill="url(#gPlateC)"/>
<rect x="1557" y="1141.2" width="150.6" height="1.4" rx="0.7" fill="#f6f8fb" opacity="0.7"/>
<path d="M1556,1249.2 H1708.6 V1248.5 a3.3,3.3 0 0 1 -3.3,3.3 H1559.3 a3.3,3.3 0 0 1 -3.3,-3.3 Z" fill="#fafbfc"/>
<g transform="translate(1632.9,1195.9)">
<g opacity="0.5" fill="#8fa2bc" transform="translate(0,2.4)" filter="url(#fBlur3)"><rect x="-64.5" y="-7.4" width="129" height="14.8" rx="3" transform="rotate(46.5)"/><rect x="-64.5" y="-7.4" width="129" height="14.8" rx="3" transform="rotate(-46.5)"/></g>
<rect x="-63.5" y="-6.7" width="127" height="13.4" rx="2.6" fill="url(#gArm)" transform="rotate(46.5)"/>
<rect x="-63.5" y="-6.7" width="127" height="13.4" rx="2.6" fill="url(#gArm)" transform="rotate(-46.5)"/>
<circle r="19" cy="1" fill="#8fa2bc" opacity="0.5" filter="url(#fBlur3)"/>
</g>
<!-- HTTP live -->
<circle cx="2104" cy="1196.7" r="31.5" fill="#3f8ae8"/>
<path d="M2094,1181.4 L2120.5,1196.7 L2094,1212 Z" fill="#fff" stroke="#fff" stroke-width="1" stroke-linejoin="round"/>
<g fill="none" stroke="#f4f4f4" stroke-width="7" stroke-linecap="round">
<path d="M2032.4,1160.4 A83.4,83.4 0 0 0 2032.4,1232.8"/>
<path d="M2173.1,1160.4 A83.4,83.4 0 0 1 2173.1,1232.8"/>
<path d="M2053.5,1172.6 A66,66 0 0 0 2053.5,1220.4"/>
<path d="M2152.1,1172.6 A66,66 0 0 1 2152.1,1220.4"/>
</g>
<!-- Bundle -->
<path d="M1092,1504.2 a7,7 0 0 1 7,-7 H1129 q4.6,0 8.2,3 l8.6,7.8 q3.6,3.3 8.4,3.3 H1235.4 a7,7 0 0 1 7,7 V1608 H1092 Z" fill="url(#gFoldBack)" stroke="#8fb8c9" stroke-width="2.6"/>
<path d="M1092,1520.3 H1242.4 V1611.4 a5.5,5.5 0 0 1 -5.5,5.5 H1097.5 a5.5,5.5 0 0 1 -5.5,-5.5 Z" fill="#c8e6f6" stroke="#8fb8c9" stroke-width="2.6"/>
<rect x="1091.4" y="1518.4" width="151.6" height="3.8" fill="#8ab3c5"/>
<g fill="none" stroke="#7594a8" stroke-width="2.9" stroke-linecap="butt" stroke-linejoin="round">
<path d="M1157.9,1553.65 H1149.3 a4.5,4.5 0 0 0 -4.5,4.5 V1594.1 a4.5,4.5 0 0 0 4.5,4.5 H1185.3 a4.5,4.5 0 0 0 4.5,-4.5 V1558.15 a4.5,4.5 0 0 0 -4.5,-4.5 H1176.2"/>
<path d="M1167.3,1575.6 V1537.4 M1156.3,1546.9 L1167.3,1536.2 L1178.4,1546.9"/>
</g>
</svg>
<div class="abs hub" style="left:1615.7px;top:1178.7px;width:34.4px;height:34.4px;"></div>
<!--/GRID-ICONS-->
</body>
</html>
